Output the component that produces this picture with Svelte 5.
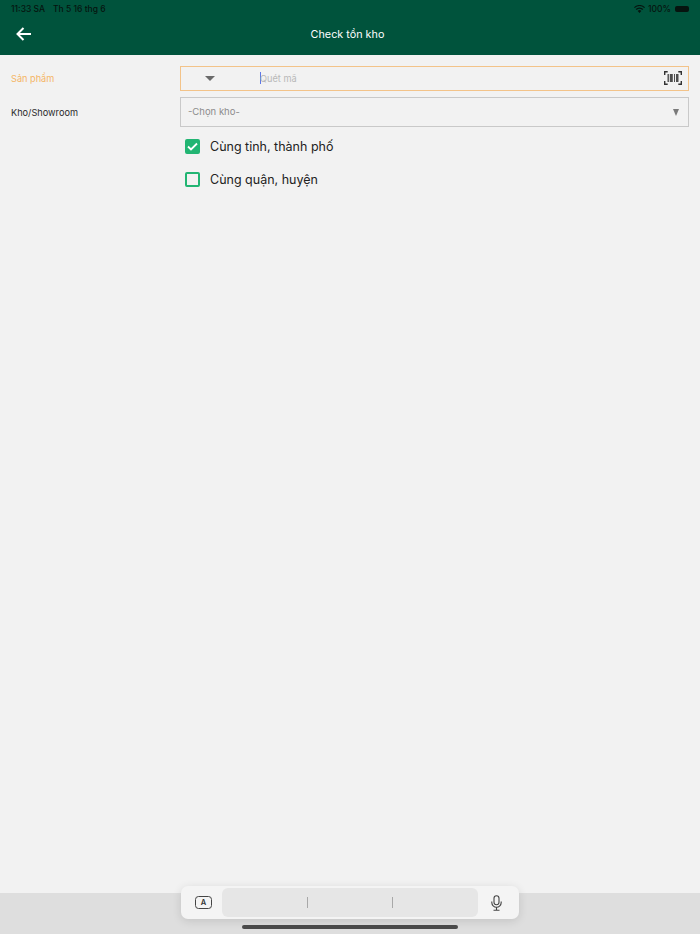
<script>
  const options = [
    { label: 'Cùng tỉnh, thành phố', checked: true },
    { label: 'Cùng quận, huyện', checked: false }
  ];
</script>

<div class="page">
  <header class="header">
    <div class="status">
      <div class="status-left"><span>11:33 SA</span><span>Th 5 16 thg 6</span></div>
      <div class="status-right">
        <svg width="11" height="8" viewBox="0 0 11 8"><path d="M5.500 8 3.700 6a2.500 2.500 0 0 1 3.600 0zM2.700 5 1.700 4a5.400 5.400 0 0 1 7.600 0l-1 1a4 4 0 0 0-5.600 0zM.8 3 0 2.200a7.800 7.800 0 0 1 11 0L10.200 3a6.700 6.700 0 0 0-9.400 0z" fill="#06140f"/></svg>
        <span>100%</span>
        <span class="battery"></span>
      </div>
    </div>
    <div class="nav">
      <svg class="back" width="16" height="14" viewBox="0 0 16 14"><path d="M15 7H2M7.500 1 1.500 7l6 6" fill="none" stroke="#fff" stroke-width="2"/></svg>
      <span class="title">Check tồn kho</span>
    </div>
  </header>

  <main class="form">
    <div class="row first">
      <span class="label active">Sản phẩm</span>
      <div class="field scan">
        <span class="combo-arrow"></span>
        <span class="caret"></span>
        <span class="placeholder">Quét mã</span>
        <svg class="barcode" width="18" height="14" viewBox="0 0 18 14">
          <path d="M.7 4V.7h3M14.300 .7h3V4M.7 10v3.300h3M14.300 13.300h3V10" fill="none" stroke="#333" stroke-width="1.400"/>
          <path d="M3.500 3h1.400v8H3.500zM5.800 3h3v8h-3zM10 3h1v8h-1zM12 3h2.500v8H12z" fill="#4f4f4f"/>
        </svg>
      </div>
    </div>
    <div class="row second">
      <span class="label">Kho/Showroom</span>
      <div class="field select">
        <span class="select-text">-Chọn kho-</span>
        <span class="select-arrow"></span>
      </div>
    </div>
    <div class="checks">
      {#each options as o}
        <div class="check-row">
          <span class="box" class:on={o.checked}>
            {#if o.checked}
              <svg width="11" height="9" viewBox="0 0 11 9"><path d="M1 4.500 4 7.500 10 1.500" fill="none" stroke="#fff" stroke-width="1.800"/></svg>
            {/if}
          </span>
          <span class="check-label">{o.label}</span>
        </div>
      {/each}
    </div>
  </main>

  <footer class="kb">
    <div class="toolbar">
      <span class="tool-a"><span>A</span></span>
      <div class="suggest"><i></i><i></i></div>
      <svg class="mic" width="11" height="16" viewBox="0 0 11 16">
        <rect x="3" y="0.700" width="5" height="9" rx="2.500" fill="none" stroke="#444" stroke-width="1.100"/>
        <path d="M.8 6.500v1a4.700 4.700 0 0 0 9.400 0v-1M5.500 12.200v3M2.500 15.300h6" fill="none" stroke="#444" stroke-width="1.100"/>
      </svg>
    </div>
    <div class="home"></div>
  </footer>
</div>

<style>
  :global(body) { margin: 0; background: #f2f2f2; }
  .page {
    width: 700px; height: 934px; display: flex; flex-direction: column;
    font-family: Inter, "Noto Sans", sans-serif; overflow: hidden; background: #f2f2f2;
  }
  .header { background: #00533c; height: 55px; flex: none; box-sizing: border-box; padding: 3px 12px 0 11px; }
  .status { display: flex; justify-content: space-between; align-items: center; height: 11px; font-size: 8.500px; font-weight: 500; color: #06140f; }
  .status-left { display: flex; gap: 8px; }
  .status-right { display: flex; align-items: center; gap: 3px; margin-right: -1px; }
  .battery { width: 14px; height: 6px; background: #06140f; border-radius: 2px; margin-left: 1px; }
  .nav { position: relative; display: flex; justify-content: center; align-items: center; height: 21px; margin-top: 10px; }
  .back { position: absolute; left: 5px; top: 3px; }
  .title { color: #fff; font-size: 10.800px; margin-left: -4px; }

  .form { flex: 1; display: flex; flex-direction: column; padding: 11px 11px 0; }
  .row { display: flex; align-items: center; }
  .second { margin-top: 6.500px; }
  .label { width: 169px; flex: none; font-size: 9.200px; color: #2b2b2b; }
  .label.active { color: #f5b565; }
  .field { flex: 1; box-sizing: border-box; display: flex; align-items: center; position: relative; }
  .scan { height: 24.500px; border: 1px solid #f3c389; }
  .select { height: 30px; border: 1px solid #c9c9c9; padding: 0 9px 2px 7px; justify-content: space-between; }
  .combo-arrow { margin-left: 23.500px; border-left: 5px solid transparent; border-right: 5px solid transparent; border-top: 5.500px solid #6a6a6a; }
  .caret { width: 1.500px; height: 12px; background: #5f78e8; margin-left: 45px; }
  .placeholder { font-size: 9.200px; color: #b8b8b8; margin-left: -1px; }
  .barcode { position: absolute; right: 6px; top: 4px; }
  .select-text { font-size: 9.500px; color: #8c8c8c; }
  .select-arrow { border-left: 3.500px solid transparent; border-right: 3.500px solid transparent; border-top: 7px solid #7a7a7a; margin-top: 3px; }

  .checks { margin: 3px 0 0 173.500px; display: flex; flex-direction: column; }
  .check-row { display: flex; align-items: center; height: 33px; }
  .box { width: 15px; height: 15px; box-sizing: border-box; border: 2px solid #22b573; border-radius: 2px; display: flex; align-items: center; justify-content: center; }
  .box.on { background: #22b573; }
  .check-label { margin-left: 10.500px; font-size: 12.500px; color: #222; }

  .kb { height: 41px; flex: none; background: #dedede; position: relative; }
  .toolbar {
    position: absolute; left: 181px; top: -7px; width: 338px; height: 33px; box-sizing: border-box;
    background: #f4f4f4; border-radius: 7px; box-shadow: 0 2px 10px rgba(0,0,0,.12);
    display: flex; align-items: center; padding: 0 15px 0 14px;
  }
  .tool-a { width: 17px; height: 13px; box-sizing: border-box; border: 1.300px solid #444; border-radius: 3.500px; display: flex; align-items: center; justify-content: center; font-size: 7.500px; font-weight: 600; color: #333; flex: none; }
  .suggest { margin-left: 10px; width: 256px; height: 29px; background: #e6e6e6; border-radius: 6px; display: flex; align-items: center; justify-content: center; gap: 84px; flex: none; }
  .suggest i { display: block; width: 1px; height: 11px; background: #a8a8a8; }
  .mic { margin-left: 13px; flex: none; }
  .home { position: absolute; left: 242px; bottom: 5px; width: 216px; height: 4px; border-radius: 2px; background: #4a4a4a; }
</style>
